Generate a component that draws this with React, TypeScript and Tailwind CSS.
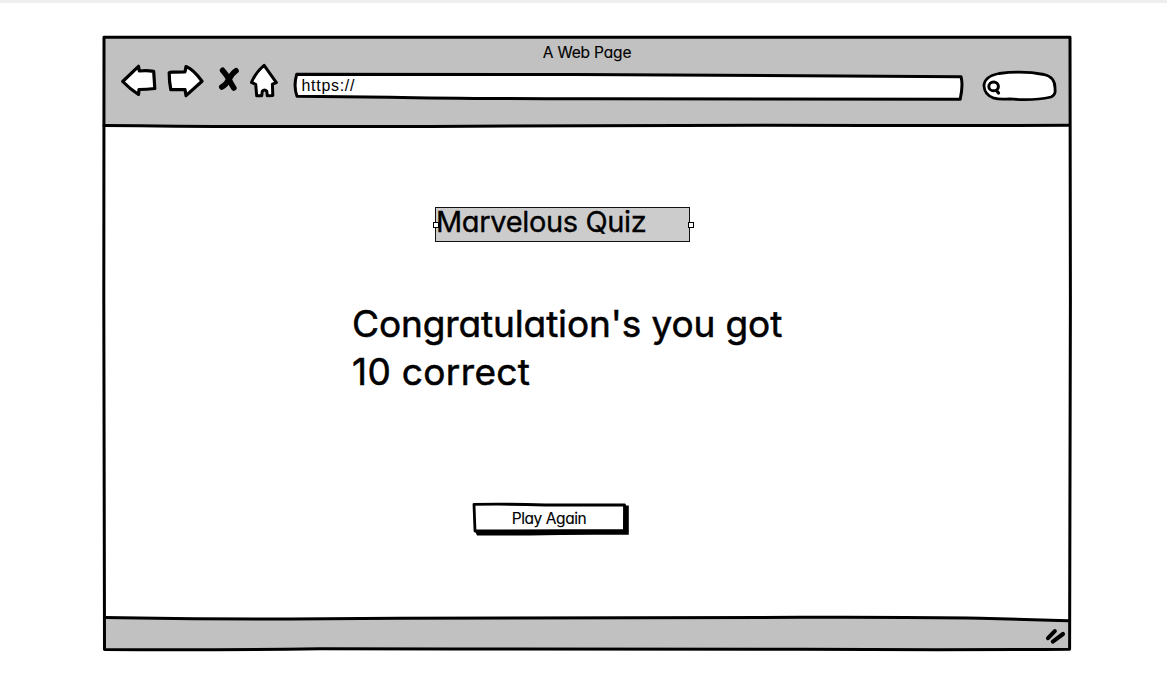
import React from "react";

const ink = {
  fill: "none",
  stroke: "#000",
  strokeLinecap: "round",
  strokeLinejoin: "round",
} as const;

const sketchFont = "font-['Inter',sans-serif] [font-feature-settings:'cv11'] text-black whitespace-nowrap";

function WindowOutline() {
  return (
    <svg className="absolute inset-0 pointer-events-none" width="971" height="618" viewBox="101 35 971 618" {...ink} strokeWidth="3">
      <path d="M104 37.2L1070 37.2L1070.4 300L1069.6 649.3Q940 650 800 649.3Q600 649.3 450 649L320 648.7Q200 650.5 104.5 649.5L103.8 300Z" />
      <path d="M104 125.4Q240 127 430 126.4L590 125.8Q760 124.6 900 125.6L1069 125.3" />
      <path d="M105 617.6Q220 620 400 618.2Q600 617.6 800 617.3Q920 617 980 618.2L1068 620.8" />
    </svg>
  );
}

function BackIcon() {
  return (
    <svg width="38" height="36" viewBox="120 63 38 36" {...ink} fill="#fff" strokeWidth="3.2">
      <path d="M122.7 81.5L138.5 66.3L139.3 71Q147 70.3 153.7 71.3L154.8 88.5Q147 89.5 139 89.5L138.5 94.5Q130 89 122.7 81.5Z" />
    </svg>
  );
}

function ForwardIcon() {
  return (
    <svg width="38" height="36" viewBox="166 63 38 36" {...ink} fill="#fff" strokeWidth="3.2">
      <path d="M169.2 72.8Q170.5 71.7 174.5 72.2L185 71.8L186 66.5Q193 69 202 81.2L186 95.6L185 89.6L170.8 89.7Q169.2 82 169.2 72.8Z" />
    </svg>
  );
}

function StopIcon() {
  return (
    <svg width="24" height="36" viewBox="217 63 24 36" {...ink} strokeWidth="5.6">
      <path d="M222.6 70.3Q226.8 75 229 79.5T233.8 88" />
      <path d="M236 70.8Q232 73.5 229 79.2T221.8 87" />
    </svg>
  );
}

function HomeIcon() {
  return (
    <svg width="30" height="38" viewBox="249 63 30 38" {...ink} fill="#fff" strokeWidth="3">
      <path d="M264.1 65.3L276.4 82.6L272.4 84.2L272.8 95.4L267.3 95.8L266.8 91.3Q264.5 88.5 262.3 91.3L261.7 95.7L256.7 95.8L255.7 84.3L251.5 82.4Q256 71.8 264.1 65.3Z" />
    </svg>
  );
}

function AddressBar() {
  return (
    <div className="relative h-[31px] w-[673px]">
      <svg className="absolute inset-0" width="673" height="31" viewBox="292 71 673 31" {...ink} fill="#fff" strokeWidth="3">
        <path d="M296.7 74.3Q420 74.2 575 74.5Q760 75.4 961 76.7Q963.3 85 960.2 99.2Q850 99 590 98.8Q460 98.7 390 97.2L297 96.2Q293.3 86 296.7 74.3Z" />
      </svg>
      <span className="relative block pl-[9.5px] pt-[5px] font-['Liberation_Sans',sans-serif] text-[16px] leading-[20px] tracking-[0.7px] text-black">
        https://
      </span>
    </div>
  );
}

function SearchBox() {
  return (
    <svg width="76" height="34" viewBox="981 69 76 34" {...ink} fill="#fff" strokeWidth="2.8">
      <path d="M984 86Q984 76.5 999 73.5Q1023 70.5 1044 74.5Q1055.5 77 1055 89Q1056 95 1051 97Q1033 101 1009 98.9Q999 99.6 993 97.8Q984.5 94.5 984 86Z" />
      <ellipse cx="993.6" cy="86.4" rx="4.8" ry="4.4" strokeWidth="3" />
      <path d="M996.5 90.5L998.5 93" strokeWidth="3.2" />
    </svg>
  );
}

function Header() {
  return (
    <header className="ml-[3px] h-[89px] w-[966px] bg-[#c1c1c1]">
      <p className={`${sketchFont} h-[26px] pt-[6px] text-center text-[15.5px] leading-[20px] tracking-[-0.16px] [-webkit-text-stroke:0.15px_#000]`}>A Web Page</p>
      <div className="flex items-start pl-[16px]">
        <BackIcon />
        <div className="ml-[8px]"><ForwardIcon /></div>
        <div className="ml-[13px]"><StopIcon /></div>
        <div className="ml-[8px]"><HomeIcon /></div>
        <div className="ml-[13px] mt-[8px]"><AddressBar /></div>
        <div className="ml-[16px] mt-[6px]"><SearchBox /></div>
      </div>
    </header>
  );
}

function QuizTitle() {
  return (
    <div className="relative ml-[334px] h-[35px] w-[255px] border border-[#111] bg-[#ccc]">
      <h1 className={`${sketchFont} text-[29px] font-normal leading-[28px] tracking-[-0.35px] [-webkit-text-stroke:0.35px_#000]`}>Marvelous Quiz</h1>
      <span className="absolute -left-[3px] top-[14px] size-[6px] border border-black bg-white" />
      <span className="absolute -right-[5px] top-[14px] size-[6px] border border-black bg-white" />
    </div>
  );
}

function PlayAgain() {
  return (
    <button className="relative ml-[370px] block h-[35px] w-[160px] text-center">
      <svg className="absolute inset-0" width="160" height="35" viewBox="471 501 160 35">
        <path d="M475 505.5H628.8V534.8Q570 534.3 530 535.5L477 535.5L475 531Z" />
        <path d="M474 504.4Q510 503.8 545 505L624.5 504.8L624.4 530.5L475 531Z" fill="#fff" stroke="#000" strokeWidth="2.8" strokeLinejoin="round" />
      </svg>
      <span className={`${sketchFont} relative block pr-[4px] text-[15.5px] leading-[20px] tracking-[-0.42px] [-webkit-text-stroke:0.15px_#000]`}>Play Again</span>
    </button>
  );
}

function Footer() {
  return (
    <footer className="ml-[3px] flex h-[31px] w-[966px] justify-end bg-[#c1c1c1] [clip-path:polygon(0_0,90%_0,100%_3px,100%_100%,0_100%)]">
      <svg className="mr-[3px] mt-[8px]" width="24" height="20" viewBox="1043 626 24 20" {...ink} strokeWidth="4.1">
        <path d="M1048 638.2L1054.8 631.1M1052.8 641.6L1063 634" />
      </svg>
    </footer>
  );
}

export default function App() {
  return (
    <div className="h-[684px] w-[1167px] overflow-hidden bg-white">
      <div className="h-[3px] bg-[#eee]" />
      <main className="relative ml-[101px] mt-[32px] h-[618px] w-[971px] pt-[2px]">
        <Header />
        <section className="h-[492px] pt-[81px]">
          <QuizTitle />
          <p className={`${sketchFont} ml-[251px] mt-[58px] text-[37px] leading-[48px] [-webkit-text-stroke:0.55px_#000]`}>
            <span className="tracking-[-0.12px]">Congratulation's you got</span>
            <br />
            <span className="tracking-[0.35px]">10 correct</span>
          </p>
          <div className="mt-[105px]"><PlayAgain /></div>
        </section>
        <Footer />
        <WindowOutline />
      </main>
    </div>
  );
}
